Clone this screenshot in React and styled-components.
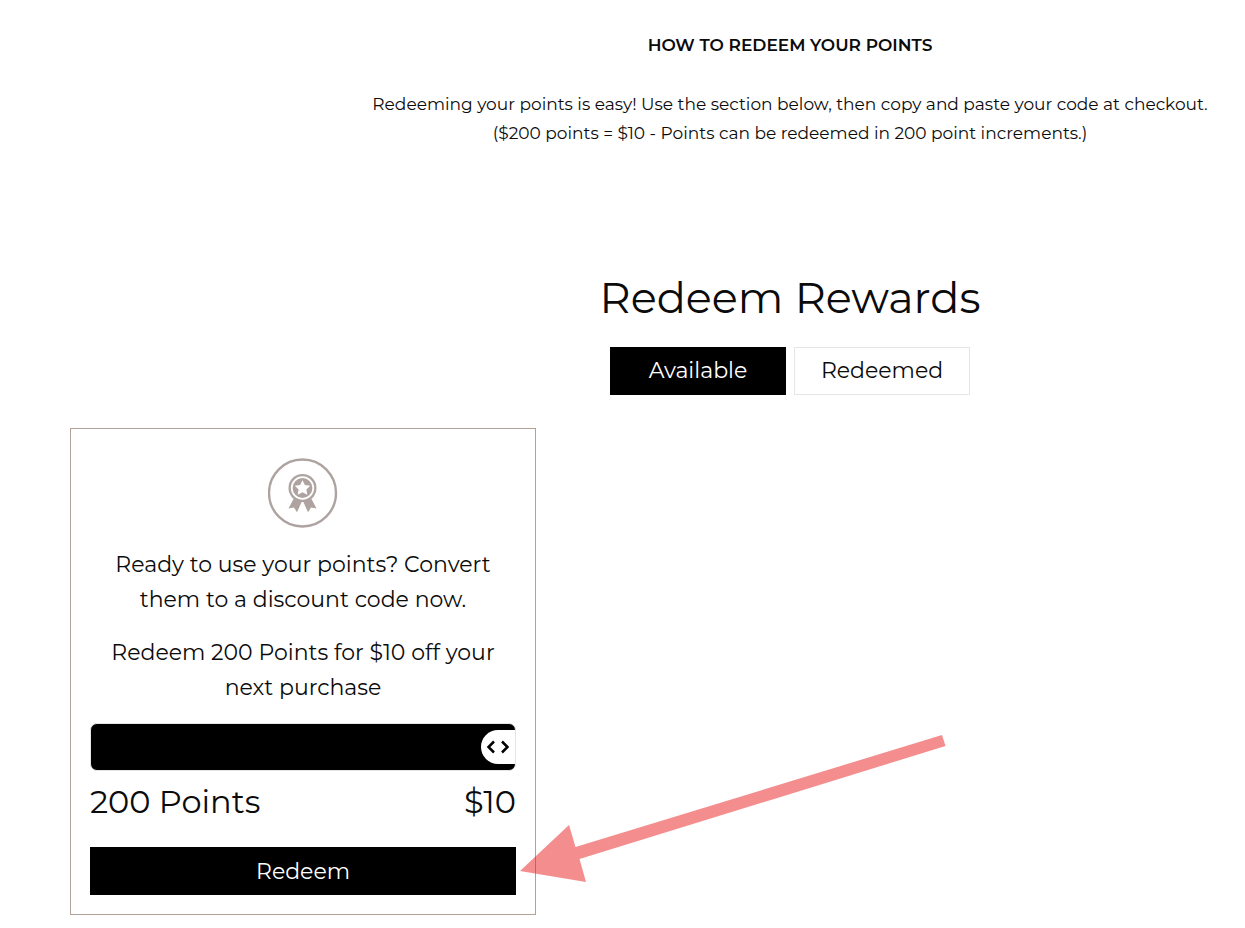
import { useState } from "react";
import styled, { createGlobalStyle } from "styled-components";

const GlobalStyle = createGlobalStyle`
  *, *::before, *::after {
    box-sizing: border-box;
  }

  body {
    margin: 0;
    background: #fff;
    color: #0b0b0b;
    font-family: Montserrat, Inter, sans-serif;
    font-size: 17px;
    font-weight: 400;
    overflow-x: hidden;
  }

  h1, h2, p {
    margin: 0;
  }

  button {
    font-family: inherit;
    font-weight: inherit;
    cursor: pointer;
  }
`;

const Page = styled.main`
  padding: 31px 0 13px 70px;
`;

const Intro = styled.section`
  padding-left: 265px;
  text-align: center;
  line-height: 29px;
`;

const IntroTitle = styled.h2`
  margin-bottom: 30px;
  font-size: 17px;
  font-weight: 600;
`;

const RewardsHeader = styled.header`
  display: flex;
  flex-direction: column;
  align-items: center;
  margin-top: 120px;
  padding-left: 265px;
`;

const RewardsTitle = styled.h1`
  font-size: 43px;
  font-weight: 400;
  line-height: 60px;
`;

const Tabs = styled.div`
  display: flex;
  gap: 8px;
  margin-top: 19px;
`;

const Tab = styled.button`
  width: 176px;
  height: 48px;
  padding: 0 0 2px;
  border: 1px solid ${(props) => (props.$active ? "#000" : "#e5e5e9")};
  background: ${(props) => (props.$active ? "#000" : "#fff")};
  color: ${(props) => (props.$active ? "#fff" : "#0b0b0b")};
  font-size: 22px;
`;

const Card = styled.article`
  width: 466px;
  max-width: 100%;
  margin-top: 33px;
  padding: 29px 19px 19px;
  border: 1px solid #b2a196;
  text-align: center;
`;

const Medal = styled.svg`
  display: block;
  width: 70px;
  height: 70px;
  margin: 0 auto 19px;
`;

const CardText = styled.p`
  padding: 0 20px;
  margin-bottom: 18px;
  font-size: 22px;
  line-height: 35px;
`;

const SliderBox = styled.div`
  position: relative;
  height: 48px;
  border: 1px solid #e5e5e9;
  border-radius: 7px;
  background: #000;
  overflow: hidden;
`;

const Slider = styled.input`
  appearance: none;
  display: block;
  width: 100%;
  height: 46px;
  margin: 0;
  background: transparent;
  cursor: pointer;

  &::-webkit-slider-thumb {
    appearance: none;
    width: 34px;
    height: 34px;
    border-radius: 17px 0 0 17px;
    background: #fff;
  }

  &::-moz-range-thumb {
    width: 34px;
    height: 34px;
    border: 0;
    border-radius: 17px 0 0 17px;
    background: #fff;
  }
`;

const SliderArrows = styled.span`
  position: absolute;
  top: 0;
  bottom: 0;
  right: 0;
  width: 34px;
  display: flex;
  align-items: center;
  justify-content: center;
  pointer-events: none;
`;

const Amounts = styled.div`
  display: flex;
  justify-content: space-between;
  margin-top: 11px;
  font-size: 32px;
  line-height: 40px;
`;

const RedeemButton = styled.button`
  display: block;
  width: 100%;
  height: 48px;
  margin-top: 25px;
  border: none;
  background: #000;
  color: #fff;
  font-size: 22px;
`;

const Arrow = styled.svg`
  position: absolute;
  top: 735px;
  left: 520px;
  width: 426px;
  height: 147px;
  pointer-events: none;
`;

const MedalIcon = () => (
  <Medal viewBox="0 0 70 70" aria-hidden="true">
    <circle cx="34.5" cy="35" r="33.5" fill="none" stroke="#aea3a1" strokeWidth="2.4" />
    <path d="M25.5 41 20.5 50.5 26 49.5 29 54.3 34.5 42zM43.5 41 48.5 50.5 43 49.5 40 54.3 34.5 42z" fill="#aea3a1" />
    <circle cx="34.5" cy="30" r="14" fill="#aea3a1" />
    <circle cx="34.5" cy="30" r="10.8" fill="none" stroke="#fff" strokeWidth="1.8" />
    <path d="m34.5 22.2 2.4 4.8 5.3.8-3.8 3.7.9 5.3-4.8-2.5-4.8 2.5.9-5.3-3.800-3.700 5.300-.8z" fill="#fff" />
  </Medal>
);

const ArrowsIcon = () => (
  <svg width="24" height="14" viewBox="0 0 24 14" fill="none" stroke="#000" strokeWidth="2.5" aria-hidden="true">
    <path d="M8 1.500 2.500 7 8 12.500M16 1.500 21.500 7 16 12.500" />
  </svg>
);

export default function App() {
  const [tab, setTab] = useState("available");

  return (
    <>
      <GlobalStyle />
      <Page>
        <Intro>
          <IntroTitle>HOW TO REDEEM YOUR POINTS</IntroTitle>
          <p>
            Redeeming your points is easy! Use the section below, then copy and paste your code at checkout.
            <br />
            ($200 points = $10 - Points can be redeemed in 200 point increments.)
          </p>
        </Intro>

        <RewardsHeader>
          <RewardsTitle>Redeem Rewards</RewardsTitle>
          <Tabs>
            <Tab $active={tab === "available"} onClick={() => setTab("available")}>Available</Tab>
            <Tab $active={tab === "redeemed"} onClick={() => setTab("redeemed")}>Redeemed</Tab>
          </Tabs>
        </RewardsHeader>

        <Card>
          <MedalIcon />
          <CardText>
            Ready to use your points? Convert
            <br />
            them to a discount code now.
          </CardText>
          <CardText>
            Redeem 200 Points for $10 off your
            <br />
            next purchase
          </CardText>
          <SliderBox>
            <Slider type="range" min="0" max="200" step="200" defaultValue="200" aria-label="Points to redeem" />
            <SliderArrows>
              <ArrowsIcon />
            </SliderArrows>
          </SliderBox>
          <Amounts>
            <span>200 Points</span>
            <span>$10</span>
          </Amounts>
          <RedeemButton>Redeem</RedeemButton>
        </Card>

        <Arrow viewBox="0 0 426 147" aria-hidden="true">
          <path
            d="M0 136 49 90 55.5 112 422 0 425.5 11 59.5 124 66 147z"
            fill="#ea1c1c"
            fillOpacity="0.5"
          />
        </Arrow>
      </Page>
    </>
  );
}
